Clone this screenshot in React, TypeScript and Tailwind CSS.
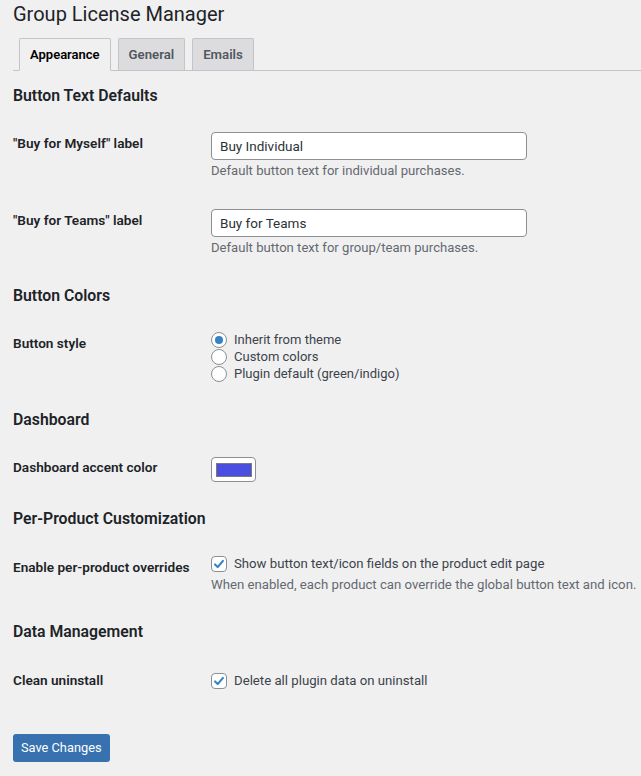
import { useState } from "react";

const font = "font-['Roboto','Liberation_Sans',sans-serif]";

function SectionTitle({ children, className = "" }: { children: string; className?: string }) {
  return (
    <h2 className={`text-[15.8px] font-semibold leading-5 text-[#1d2327] ${className}`}>{children}</h2>
  );
}

function Row({ label, children, className = "" }: { label: string; children: React.ReactNode; className?: string }) {
  return (
    <div className={`flex ${className}`}>
      <div className="w-[198px] shrink-0 pt-[17px] text-[13.6px] font-semibold leading-[18px] text-[#1d2327]">{label}</div>
      <div className="pt-[15px]">{children}</div>
    </div>
  );
}

function TextField({ value }: { value: string }) {
  return (
    <input
      defaultValue={value}
      className="block h-7 w-[316px] rounded-[4px] border border-[#8c8f94] bg-white px-2 text-[13.5px] text-[#2c3338] outline-none"
    />
  );
}

function Radio({ checked, label, onSelect }: { checked: boolean; label: string; onSelect: () => void }) {
  return (
    <label className="flex h-[17px] cursor-pointer items-center gap-[7px]" onClick={onSelect}>
      <span className="flex h-4 w-4 items-center justify-center rounded-full border border-[#8c8f94] bg-white">
        {checked && <span className="h-2 w-2 rounded-full bg-[#3582c4]" />}
      </span>
      <span className="text-[13px] text-[#3c434a]">{label}</span>
    </label>
  );
}

function Checkbox({ checked, label, onToggle }: { checked: boolean; label: string; onToggle: () => void }) {
  return (
    <label className="flex h-4 cursor-pointer items-center gap-[7px]" onClick={onToggle}>
      <span className="flex h-4 w-4 items-center justify-center rounded-[4px] border border-[#8c8f94] bg-white">
        {checked && (
          <svg viewBox="0 0 16 16" className="h-[14px] w-[14px]" fill="none" stroke="#3582c4" strokeWidth="2.4" strokeLinecap="round" strokeLinejoin="round">
            <path d="M3.5 8.5l3 3 6-7" />
          </svg>
        )}
      </span>
      <span className="text-[13.2px] text-[#3c434a]">{label}</span>
    </label>
  );
}

export default function App() {
  const [style, setStyle] = useState("inherit");
  const [overrides, setOverrides] = useState(true);
  const [cleanup, setCleanup] = useState(true);

  const styles = [
    { id: "inherit", label: "Inherit from theme" },
    { id: "custom", label: "Custom colors" },
    { id: "plugin", label: "Plugin default (green/indigo)" },
  ];

  return (
    <div className={`min-h-screen bg-[#f0f0f1] pl-[13px] text-[13px] text-[#3c434a] ${font}`}>
      <h1 className="pt-0 text-[20px] font-normal leading-[29px] text-[#1d2327]">Group License Manager</h1>

      <nav className="mt-[9px] flex gap-[7px] border-b border-[#c3c4c7] pl-[6px]">
        <a className="-mb-px rounded-t-[2px] border border-[#c3c4c7] border-b-[#f0f0f1] bg-[#f0f0f1] px-[10px] pb-[3px] pt-[4px] text-[13px] font-semibold leading-6 text-[#000]">
          Appearance
        </a>
        <a className="rounded-t-[2px] border border-b-0 border-[#c3c4c7] bg-[#dcdcde] px-[10px] pb-[3px] pt-[4px] text-[13.2px] font-semibold leading-6 text-[#50575e]">
          General
        </a>
        <a className="rounded-t-[2px] border border-b-0 border-[#c3c4c7] bg-[#dcdcde] px-[10px] pb-[3px] pt-[4px] text-[13.2px] font-semibold leading-6 text-[#50575e]">
          Emails
        </a>
      </nav>

      <SectionTitle className="mt-[15px]">Button Text Defaults</SectionTitle>
      <div className="mt-[11px]">
        <Row label={'"Buy for Myself" label'}>
          <TextField value="Buy Individual" />
          <p className="mt-[3px] text-[13.1px] leading-4 text-[#646970]">Default button text for individual purchases.</p>
          <div className="h-[15px]" />
        </Row>
        <Row label={'"Buy for Teams" label'}>
          <TextField value="Buy for Teams" />
          <p className="mt-[3px] text-[13.1px] leading-4 text-[#646970]">Default button text for group/team purchases.</p>
          <div className="h-[15px]" />
        </Row>
      </div>

      <SectionTitle className="mt-[15px]">Button Colors</SectionTitle>
      <Row label="Button style" className="mt-[11px]">
        <div className="-mt-px">
          {styles.map((s) => (
            <Radio key={s.id} checked={style === s.id} label={s.label} onSelect={() => setStyle(s.id)} />
          ))}
        </div>
        <div className="h-4" />
      </Row>

      <SectionTitle className="mt-[12px]">Dashboard</SectionTitle>
      <Row label="Dashboard accent color" className="mt-[11px]">
        <div className="mt-px flex h-[25px] w-[45px] items-center justify-center rounded-[4px] border border-[#8c8f94] bg-white">
          <span className="h-[14px] w-[36px] border border-[#7a7a7a] bg-[#4a4fe0]" />
        </div>
        <div className="h-[14px]" />
      </Row>

      <SectionTitle className="mt-[13px]">Per-Product Customization</SectionTitle>
      <Row label="Enable per-product overrides" className="mt-[12px]">
        <Checkbox
          checked={overrides}
          label="Show button text/icon fields on the product edit page"
          onToggle={() => setOverrides(!overrides)}
        />
        <p className="mt-[5px] text-[13.2px] leading-4 text-[#646970]">When enabled, each product can override the global button text and icon.</p>
        <div className="h-[15px]" />
      </Row>

      <SectionTitle className="mt-[14px]">Data Management</SectionTitle>
      <Row label="Clean uninstall" className="mt-[12px]">
        <div className="pt-[4px]">
          <Checkbox checked={cleanup} label="Delete all plugin data on uninstall" onToggle={() => setCleanup(!cleanup)} />
        </div>
      </Row>

      <button className="mt-[45px] h-7 rounded-[3px] bg-[#3771b0] px-[8px] text-[12.8px] font-normal text-white">
        Save Changes
      </button>
    </div>
  );
}
